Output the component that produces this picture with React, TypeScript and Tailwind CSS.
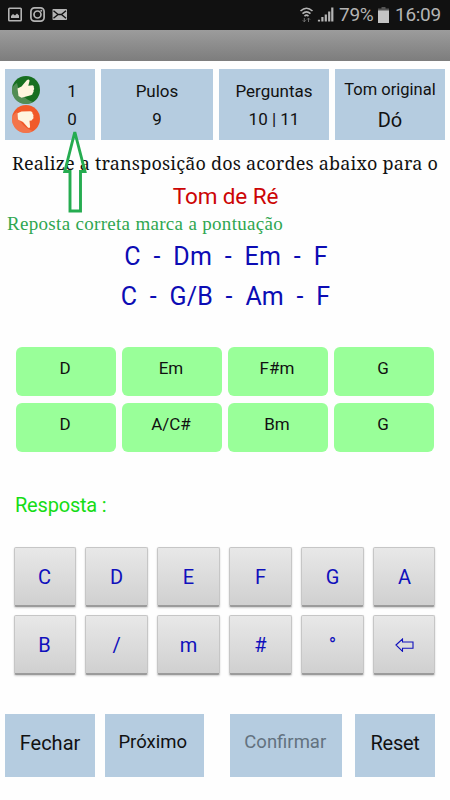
import type { ReactNode } from 'react';

const transposed = ['D', 'Em', 'F#m', 'G', 'D', 'A/C#', 'Bm', 'G'];
const keys = ['C', 'D', 'E', 'F', 'G', 'A', 'B', '/', 'm', '#', '°', 'back'];

function StatusBar() {
  return (
    <header className="flex h-[30px] items-center bg-[#111111] text-[#b4b4b4]">
      <svg className="ml-2" width="60" height="16" viewBox="0 0 60 16" fill="none" stroke="currentColor">
        <rect x="0.8" y="1.3" width="12.4" height="12.4" rx="0.8" strokeWidth="1.6" />
        <path d="M3 11V9l2-2 2 1.5L9 6.5l2 2V11z" fill="currentColor" stroke="none" />
        <rect x="22.9" y="0.9" width="13.2" height="13.2" rx="3.6" strokeWidth="1.7" />
        <circle cx="29.5" cy="7.5" r="3.5" strokeWidth="1.7" />
        <circle cx="33.3" cy="3.8" r="1" fill="currentColor" stroke="none" />
        <rect x="44.5" y="2" width="14.5" height="11" rx="0.8" fill="currentColor" stroke="none" />
        <path d="M45.5 3.8l4.5 3.7-4.5 3.7M58 3.8l-4.5 3.7 4.5 3.7M49.5 7.5h4.5" stroke="#111111" strokeWidth="1.4" />
      </svg>
      <svg className="ml-[231px]" width="36" height="18" viewBox="0 0 36 18" fill="none" stroke="currentColor">
        <path d="M1.5 5Q7.500-0.500 13.500 5M3.500 7.600Q7.500 4 11.500 7.600M5.500 10.200Q7.500 8.200 9.500 10.200" strokeWidth="1.6" />
        <path d="M5.300 16v-4M3.800 14.300l1.500 1.500 1.500-1.500M9.500 12v4M8 13.600l1.500-1.500 1.500 1.500" stroke="#707070" strokeWidth="1" />
        <path d="M20 15.500v-1.800M23.400 15.500v-4.500M26.800 15.500V8.500M30.200 15.500V5.500M33.300 15.500V1.500" strokeWidth="2.2" />
      </svg>
      <span className="ml-[4px] w-[36px] whitespace-nowrap text-[19px] leading-[30px] tracking-[-0.3px]">79%</span>
      <svg className="ml-[3px]" width="11" height="16" viewBox="0 0 11 16">
        <path d="M3.500 0h4v1.500H11V5H0V1.500h3.500z" fill="#555555" />
        <path d="M0 3.500h11V16H0z" fill="#c4c4c4" />
      </svg>
      <span className="ml-[6px] text-[19px] leading-[30px] tracking-[-0.3px]">16:09</span>
    </header>
  );
}

function Score({ up, value }: { up?: boolean; value: number }) {
  return (
    <div className="flex h-[28.5px] items-center">
      <svg className="ml-[7px]" width="28" height="28" viewBox="0 0 28 28">
        <circle cx="14" cy="14" r="14" fill={up ? '#176f20' : '#f15a29'} />
        <path d="M0 14a14 14 0 0 0 14 14q4 0 7-2Q8 22 5 7Q0 10 0 14" fill={up ? '#79a178' : '#f58661'} opacity="0.6" />
        {up ? (
          <path d="M5.500 12.500 9.500 10.500 14.500 4.500q2.300-2.300 3.100.2L16.300 9.800l4.200-.6q1.800.6 1.300 2.300 1 1.500-.3 2.700.6 1.800-.7 2.700 0 1.900-2 2.300L9.500 21.800 6.500 20z" fill="#fff5df" />
        ) : (
          <path d="M5.500 8.300 9.500 6.500 18.500 6.200q2.300.3 2.100 2.500 1.400 1 .7 2.700.8 1.900-.8 2.800-.5 1.600-3 1.500l.6 6.200q-.8 2-2.400.3L11 17 6 14.500z" fill="#fff5df" />
        )}
      </svg>
      <span className="mt-[2px] ml-[22px] w-[20px] text-center text-[17px]">{value}</span>
    </div>
  );
}

function Panel({ title, children }: { title: ReactNode; children: ReactNode }) {
  return (
    <div className="bg-[#b5cce0] pt-[8px] text-center text-[17px] leading-[28px] whitespace-nowrap">
      <p>{title}</p>
      {children}
    </div>
  );
}

function BackArrow() {
  return (
    <svg width="19" height="14" viewBox="0 0 19 14" fill="none" stroke="currentColor" strokeWidth="1.1">
      <path d="M1 7 7.500 1v3H18v6.300H7.500v3z" />
    </svg>
  );
}

export default function App() {
  return (
    <main className="relative h-[800px] w-[450px] overflow-hidden bg-[#fefefe] font-[Roboto,sans-serif] text-[#111111]">
      <StatusBar />
      <div className="h-[31px] bg-linear-to-b from-[#9c9c9c] to-[#7d7d7d]" />

      <section className="mt-[7.5px] grid h-[71.5px] grid-cols-[90px_112px_110px_110px] gap-[6px] px-[5px]">
        <div className="bg-[#b5cce0] pt-[7.5px]">
          <Score up value={1} />
          <Score value={0} />
        </div>
        <Panel title="Pulos">
          <p>9</p>
        </Panel>
        <Panel title="Perguntas">
          <p>10 | 11</p>
        </Panel>
        <Panel title={<span className="relative top-[-2px] text-[16.5px]">Tom original</span>}>
          <p className="text-[20px]">Dó</p>
        </Panel>
      </section>

      <section className="text-center whitespace-pre">
        <p className="mt-[9px] h-[28px] font-['Noto_Serif','DejaVu_Serif_Condensed','DejaVu_Serif',serif] text-[18px] leading-[28px] tracking-[0.18px]">
          Realize a transposição dos acordes abaixo para o
        </p>
        <p className="h-[37px] pl-[1px] text-[22.5px] leading-[38px] tracking-[-0.1px] text-[#cc0505]">Tom de Ré</p>
        <p className="h-[20px] pl-[7px] text-left font-['Liberation_Serif',serif] text-[19px] leading-[20px] tracking-[0.31px] text-[#2fa650]">
          Reposta correta marca a pontuação
        </p>
        <p className="mt-[3px] h-[40px] pl-[2px] text-[25px] leading-[40px] tracking-[0.18px] text-[#0c0cb4]">{'C  -  Dm  -  Em  -  F'}</p>
        <p className="h-[40px] pl-[1px] text-[25px] leading-[40px] tracking-[0.15px] text-[#0c0cb4]">{'C  -  G/B  -  Am  -  F'}</p>
      </section>

      <section className="mt-[30px] grid grid-cols-4 gap-x-[6px] gap-y-[7.5px] px-[16px]">
        {transposed.map((chord, i) => (
          <div key={i} className="h-[48.5px] rounded-[6px] bg-[#99ff99] pr-[2px] text-center text-[17px] leading-[43px]">
            {chord}
          </div>
        ))}
      </section>

      <p className="mt-[37px] h-[33px] pl-[15px] text-[20px] leading-[32px] tracking-[-0.2px] text-[#16dc16]">Resposta :</p>

      <section className="mt-[25px] grid grid-cols-6 gap-x-[9.8px] gap-y-[8px] pr-[14.5px] pl-[13.5px]">
        {keys.map((key) => (
          <button
            key={key}
            className="flex h-[60px] items-center justify-center rounded-[2px] border border-[#c6c6c6] border-b-2 border-b-[#9b9b9b] bg-linear-to-b from-[#e8e8e8] to-[#d0d0d0] pt-[2px] text-[20px] text-[#1010bc] shadow-[0_1px_2px_#cccccc]"
          >
            {key === 'back' ? <BackArrow /> : key}
          </button>
        ))}
      </section>

      <footer className="mt-[39px] flex h-[63px] pl-[5px] text-[20px] whitespace-nowrap">
        <button className="w-[90px] bg-[#b5cce0] pb-[5px]">Fechar</button>
        <button className="ml-[10px] w-[98.5px] bg-[#b5cce0] pr-[3px] pb-[5px] text-[18.5px]">Próximo</button>
        <button className="ml-[26.5px] w-[111.5px] bg-[#b5cce0] pr-[1px] pb-[5px] text-[18.5px] text-[#63727f]">Confirmar</button>
        <button className="ml-[13.5px] w-[80px] bg-[#b5cce0] pb-[5px] tracking-[-0.3px]">Reset</button>
      </footer>

      {/* arrow pointing at the score, drawn over the panels */}
      <svg className="absolute top-[129px] left-[60px]" width="30" height="86" viewBox="0 0 30 86" fill="none">
        <path d="M14.800 3 25 42.500h-4.500V82H10V42.500H4.800z" stroke="#25ac50" strokeWidth="2.9" />
      </svg>
    </main>
  );
}
